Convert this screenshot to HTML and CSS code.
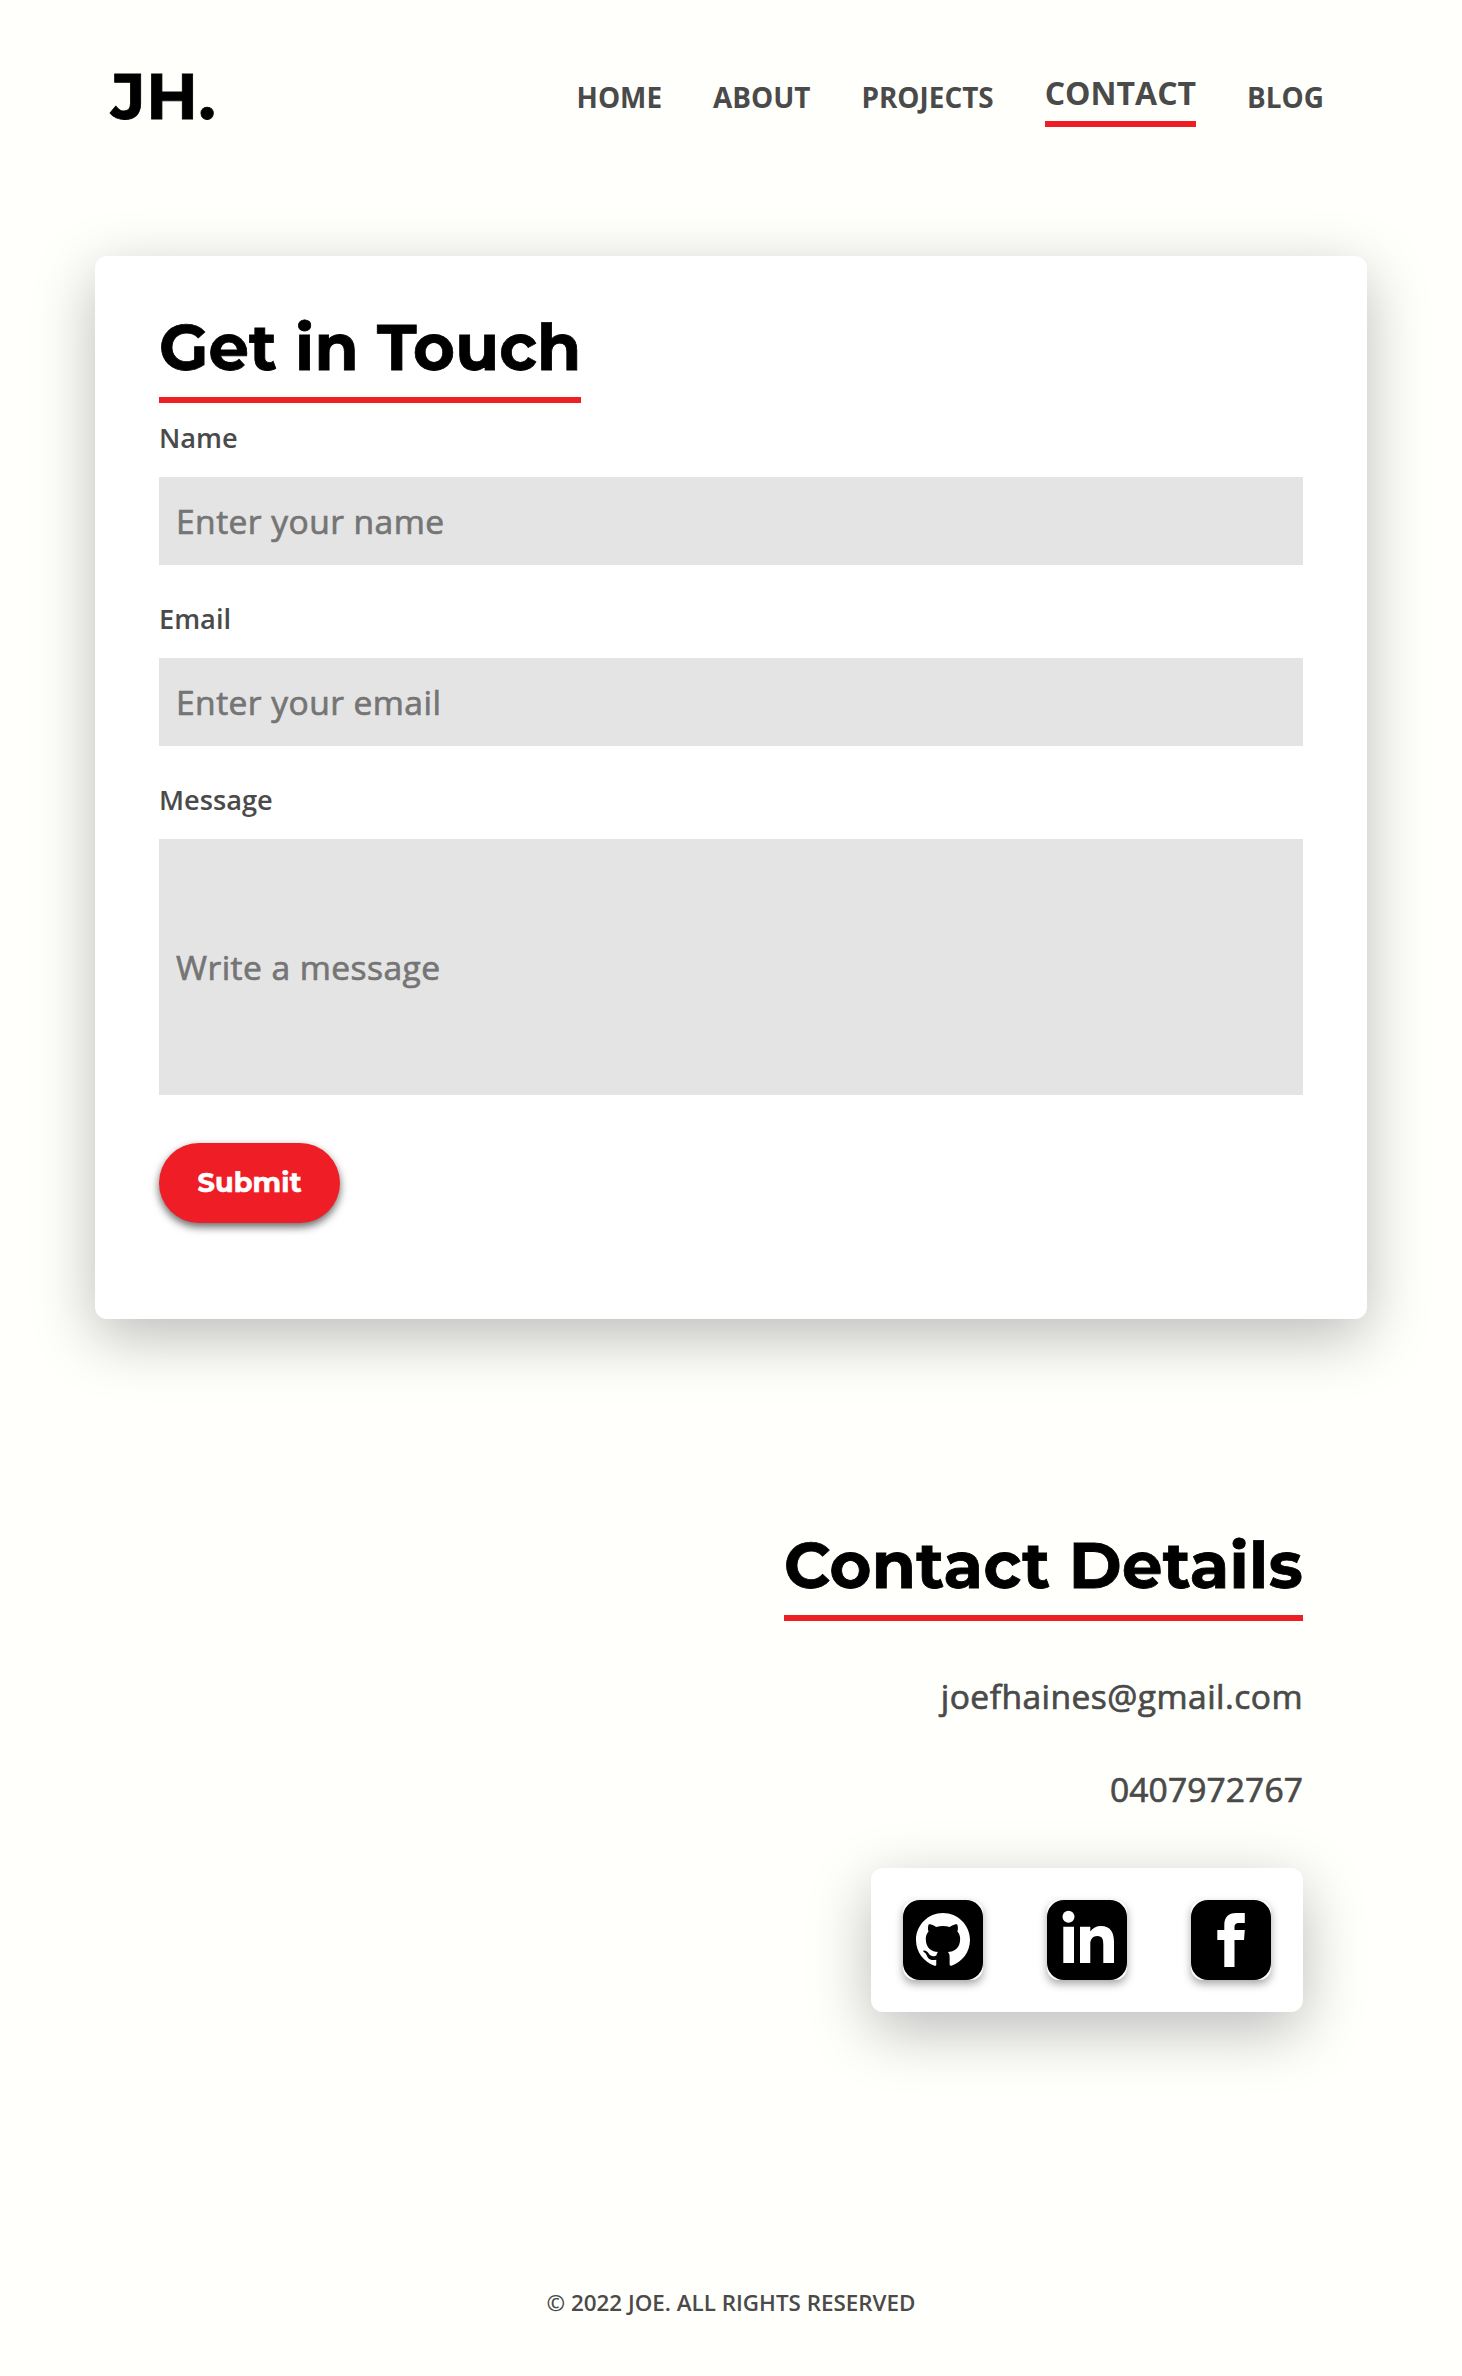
FILE: index.html
```html
<!DOCTYPE html>
<html lang="en">
<head>
<meta charset="utf-8">
<title>Contact | Joe Haines</title>
<link rel="stylesheet" href="styles.css">
</head>
<body>
<header class="header">
  <a class="logo">JH.</a>
  <nav class="nav">
    <a class="nav-link">HOME</a>
    <a class="nav-link">ABOUT</a>
    <a class="nav-link">PROJECTS</a>
    <a class="nav-link nav-link--active">CONTACT</a>
    <a class="nav-link">BLOG</a>
  </nav>
</header>
<main>
  <section class="card">
    <h2 class="title">Get in Touch</h2>
    <form class="form">
      <label class="label" for="name">Name</label>
      <input class="field" id="name" type="text" placeholder="Enter your name">
      <label class="label" for="email">Email</label>
      <input class="field" id="email" type="email" placeholder="Enter your email">
      <label class="label" for="message">Message</label>
      <input class="field field--message" id="message" type="text" placeholder="Write a message">
      <button class="submit" type="button">Submit</button>
    </form>
  </section>
  <section class="details">
    <h2 class="title title--details">Contact Details</h2>
    <p class="detail detail--email">joefhaines@gmail.com</p>
    <p class="detail">0407972767</p>
    <div class="socials">
      <a class="social" aria-label="GitHub"><svg viewBox="0 0 80 80"><path transform="translate(13 12.4) scale(2.25)" d="M12 .297c-6.63 0-12 5.373-12 12 0 5.303 3.438 9.8 8.205 11.385.6.113.82-.258.82-.577 0-.285-.01-1.04-.015-2.04-3.338.724-4.042-1.61-4.042-1.61C4.422 18.07 3.633 17.7 3.633 17.7c-1.087-.744.084-.729.084-.729 1.205.084 1.838 1.236 1.838 1.236 1.07 1.835 2.809 1.305 3.495.998.108-.776.417-1.305.76-1.605-2.665-.3-5.466-1.332-5.466-5.93 0-1.31.465-2.38 1.235-3.22-.135-.303-.54-1.523.105-3.176 0 0 1.005-.322 3.3 1.23.96-.267 1.98-.399 3-.405 1.02.006 2.04.138 3 .405 2.28-1.552 3.285-1.23 3.285-1.23.645 1.653.24 2.873.12 3.176.765.84 1.23 1.91 1.23 3.22 0 4.61-2.805 5.625-5.475 5.92.42.36.81 1.096.81 2.22 0 1.606-.015 2.896-.015 3.286 0 .315.21.69.825.57C20.565 22.092 24 17.592 24 12.297c0-6.627-5.373-12-12-12"/></svg></a>
      <a class="social" aria-label="LinkedIn"><svg viewBox="0 0 80 80"><circle cx="21.5" cy="16.7" r="6"/><path d="M16.3 26.7H27V63H16.3zM33 26.7h10.300V31.500C45.500 28 49.500 26 54 26c9.500 0 13 6.500 13 16v21H56.300V44.500c0-5-1-8.500-5.800-8.500S43.300 39.500 43.300 44V63H33z"/></svg></a>
      <a class="social" aria-label="Facebook"><svg viewBox="0 0 80 80"><path d="M33.300 67V40H26.300V30H33.300V25C33.300 17 37.500 13 45 13h8.800V23H48c-3.500 0-4.500 1.500-4.500 4.500V30h10.300L53 40h-9.500v27z"/></svg></a>
    </div>
  </section>
</main>
<footer class="footer">© 2022 JOE. ALL RIGHTS RESERVED</footer>
</body>
</html>
```
FILE: styles.css
```css
* { box-sizing: border-box; }

body {
  margin: 0;
  height: 2376px;
  background: #fffffb;
  color: #4a4a4a;
  font-family: "Open Sans", sans-serif;
}

.header {
  display: flex;
  justify-content: space-between;
  align-items: flex-start;
  height: 256px;
  padding: 56px 138px 0 111px;
}

.logo {
  color: #000;
  font: 700 64px/80px Montserrat, Inter, sans-serif;
  letter-spacing: 0.7px;
  -webkit-text-stroke: 0.8px #000;
}

.nav {
  display: flex;
  gap: 51px;
  padding-top: 16px;
}

.nav-link {
  font-size: 27.9px;
  font-weight: 700;
  line-height: 51px;
}

.nav-link--active {
  height: 55px;
  border-bottom: 6px solid #ef1d26;
  font-size: 32px;
  line-height: 42px;
}

.card {
  width: 1272px;
  height: 1063px;
  margin: 0 auto;
  padding: 52px 64px 0;
  border-radius: 12px;
  background: #fff;
  box-shadow: 0 18px 62px rgba(4, 4, 14, 0.27);
}

.title {
  width: max-content;
  height: 95px;
  margin: 0;
  border-bottom: 6px solid #ef1d26;
  color: #000;
  font: 700 64px/78px Montserrat, Inter, sans-serif;
  letter-spacing: 0.1px;
  white-space: nowrap;
  -webkit-text-stroke: 0.8px #000;
}

.title--details { letter-spacing: 0.33px; }

.form {
  display: flex;
  flex-direction: column;
  align-items: flex-start;
}

.label {
  height: 74px;
  padding-top: 16px;
  font-size: 27.2px;
  font-weight: 600;
  line-height: 37px;
}

.field {
  width: 100%;
  height: 88px;
  margin-bottom: 19px;
  padding: 0 17px;
  border: 0;
  border-radius: 0;
  background: #e4e4e4;
  font: 500 33.6px "Open Sans", sans-serif;
  letter-spacing: 0.45px;
}

.field::placeholder {
  color: #757575;
  -webkit-text-stroke: 0.7px #757575;
}

.field--message {
  height: 256px;
  margin-bottom: 48px;
}

.submit {
  width: 181px;
  height: 80px;
  padding: 0 0 2px;
  border: 0;
  border-radius: 40px;
  background: #ef1d26;
  box-shadow: 0 4px 8px rgba(0, 0, 0, 0.6);
  color: #fff;
  font: 700 27.2px Montserrat, Inter, sans-serif;
  letter-spacing: 0.15px;
  -webkit-text-stroke: 0.6px #fff;
}

.details {
  display: flex;
  flex-direction: column;
  align-items: flex-end;
  padding: 207px 159px 0 0;
}

.detail {
  margin: 0;
  font-size: 33.6px;
  font-weight: 500;
  line-height: 46px;
  letter-spacing: 0.1px;
  -webkit-text-stroke: 0.7px #4a4a4a;
}

.detail--email {
  margin: 52px 0 47px;
  letter-spacing: 0.45px;
}

.socials {
  display: flex;
  gap: 64px;
  margin-top: 56px;
  padding: 32px;
  border-radius: 12px;
  background: #fff;
  box-shadow: 0 18px 62px rgba(4, 4, 14, 0.27);
}

.social {
  display: block;
  width: 80px;
  height: 80px;
  border-radius: 12px;
  background: #fff;
  box-shadow: 0 4px 8px rgba(0, 0, 0, 0.35);
}

.social svg {
  display: block;
  border-radius: 17px;
  background: #000;
  fill: #fff;
}

.footer {
  margin-top: 275px;
  text-align: center;
  font-size: 22.4px;
  font-weight: 600;
  line-height: 32px;
}
```
